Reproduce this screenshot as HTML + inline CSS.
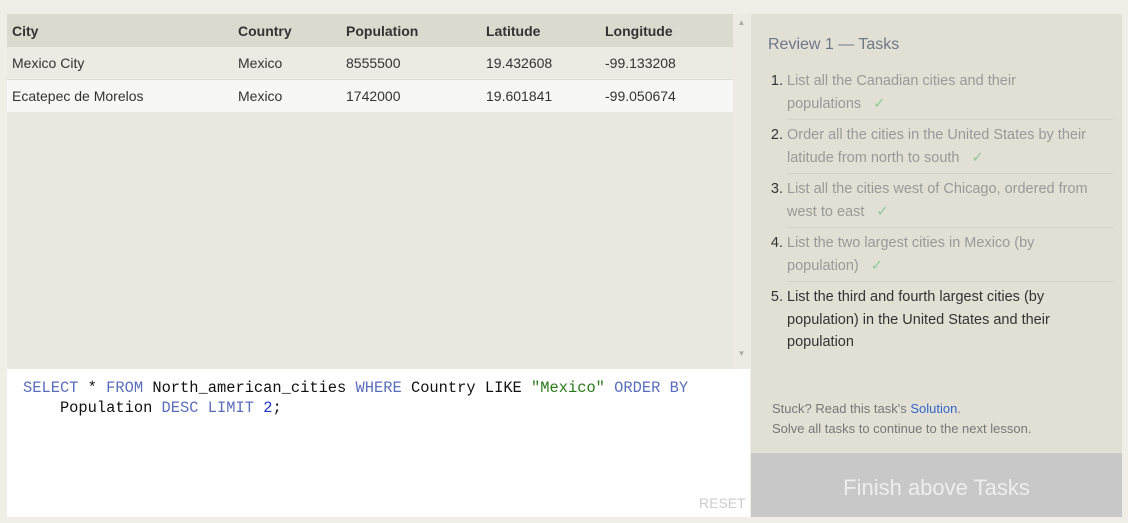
<!DOCTYPE html>
<html><head><style>
body{margin:0;width:1128px;height:517px;background:#f0eee6;font-family:"Liberation Sans",sans-serif;position:relative;overflow:hidden}
.l{position:absolute;left:7px;top:14px;width:726px;height:355px;background:#e9e8e0}
.sb{position:absolute;left:733px;top:14px;width:17px;height:355px;background:#eceae3;color:#aaa;font-size:8px;text-align:center}
table{border-collapse:collapse;width:726px;font-size:14px;color:#333}
td,th{text-align:left;padding:0 5px;height:32px}
th{font-weight:bold;background:#dbdacf;height:33px}
tr.r1 td{background:#ebeae3;border-bottom:1px solid #dcdcd6}
tr.r2 td{background:#f7f7f5}
.ed{position:absolute;left:7px;top:369px;width:743px;height:148px;background:#fff;font-family:"Liberation Mono",monospace;font-size:15.4px;line-height:20px;color:#111}
.k{color:#5a6dbb}.s{color:#2a7a1a}.n{color:#2233cc}
.r{position:absolute;left:751px;top:14px;width:371px;height:439px;background:#e2e0d5}
.btn{position:absolute;left:751px;top:453px;width:371px;height:64px;background:#c8c8c8;color:#eee;font-size:22px;text-align:center;line-height:70px}
h3{margin:0;position:absolute;left:17px;top:22px;font-weight:normal;font-size:16px;color:#6e7788}
ol{position:absolute;left:17px;top:56px;margin:0;padding:0 0 0 19px;width:326px;font-size:14.5px;line-height:22.5px;color:#999;white-space:nowrap}
li{height:45px;padding:0 0 4px 0;border-bottom:1px solid #d4d2c8}
li+li{padding-top:4px}
li::marker{color:#333}
li.last{color:#333;border:none;height:auto}
.c{color:#8dc99a;margin-left:8px}
.st{position:absolute;left:21px;top:385px;font-size:13px;color:#777;line-height:20px}
</style></head><body>
<div class="l"><table>
<tr><th style="width:216px">City</th><th style="width:98px">Country</th><th style="width:130px">Population</th><th style="width:109px">Latitude</th><th>Longitude</th></tr>
<tr class="r1"><td>Mexico City</td><td>Mexico</td><td>8555500</td><td>19.432608</td><td>-99.133208</td></tr>
<tr class="r2"><td>Ecatepec de Morelos</td><td>Mexico</td><td>1742000</td><td>19.601841</td><td>-99.050674</td></tr>
</table></div>
<div class="sb"><div style="margin-top:4px">▲</div><div style="margin-top:322px">▼</div></div>
<div class="ed"><div style="position:absolute;left:16px;top:9px;white-space:pre"><span class="k">SELECT</span> * <span class="k">FROM</span> North_american_cities <span class="k">WHERE</span> Country LIKE <span class="s">"Mexico"</span> <span class="k">ORDER BY</span>
    Population <span class="k">DESC</span> <span class="k">LIMIT</span> <span class="n">2</span>;</div>
<div style="position:absolute;left:692px;top:124px;font-family:'Liberation Sans',sans-serif;font-size:14px;color:#ccc">RESET</div></div>
<div class="r"><h3>Review 1 — Tasks</h3>
<ol>
<li>List all the Canadian cities and their<br>populations <span class="c">✓</span></li>
<li>Order all the cities in the United States by their<br>latitude from north to south <span class="c">✓</span></li>
<li>List all the cities west of Chicago, ordered from<br>west to east <span class="c">✓</span></li>
<li>List the two largest cities in Mexico (by<br>population) <span class="c">✓</span></li>
<li class="last">List the third and fourth largest cities (by<br>population) in the United States and their<br>population</li>
</ol>
<div class="st">Stuck? Read this task's <span style="color:#3366cc">Solution</span>.<br>Solve all tasks to continue to the next lesson.</div>
</div>
<div class="btn">Finish above Tasks</div>
</body></html>
